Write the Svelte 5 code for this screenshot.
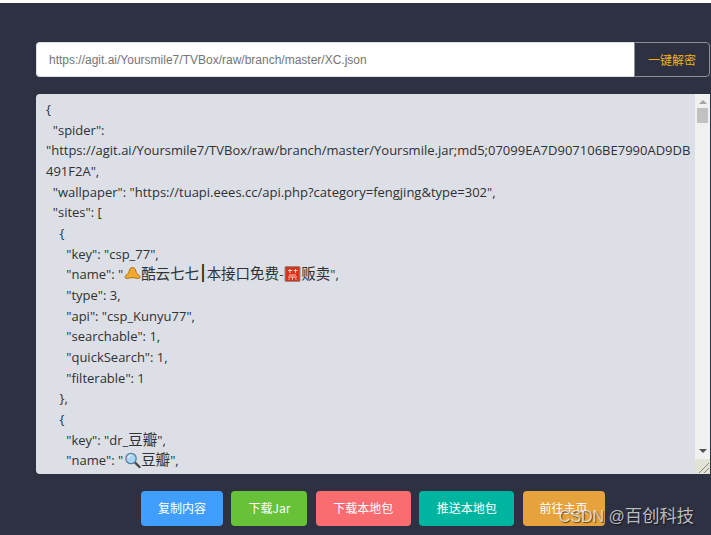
<script>
  const buttons = [
    { label: '复制内容', color: '#409eff', width: 82 },
    { label: '下载Jar', color: '#67c23a', width: 76 },
    { label: '下载本地包', color: '#f96c70', width: 95 },
    { label: '推送本地包', color: '#00b5a0', width: 95 },
    { label: '前往主页', color: '#e6a23c', width: 82 }
  ];
</script>

<div class="page">
  <div class="url-row">
    <input class="url-input" value="https://agit.ai/Yoursmile7/TVBox/raw/branch/master/XC.json" readonly />
    <button class="decrypt">一键解密</button>
  </div>

  <div class="panel">
    <pre class="code">{'{'}
  "spider":
"https://agit.ai/Yoursmile7/TVBox/raw/branch/master/Yoursmile.jar;md5;07099EA7D907106BE7990AD9DB
491F2A",
  "wallpaper": "https://tuapi.eees.cc/api.php?category=fengjing&type=302",
  "sites": [
    {'{'}
      "key": "csp_77",
      "name": "<svg class="emoji" viewBox="0 0 17 16"><path d="M8.500 1.500c-2.200 0-3.200 1.700-3.500 4-.2 1.500-1.500 2.700-3.200 4-1.300 1-.9 3 .9 3 1.500 0 2.300-.8 5.800-.8s4.300.8 5.800.8c1.800 0 2.200-2 .9-3-1.700-1.300-3-2.500-3.200-4-.3-2.300-1.300-4-3.500-4z" fill="#f0a92e" stroke="#a8650f" stroke-width=".9"/></svg><span class="cjk">酷云七七<span class="bar">┃</span>本接口免费</span>-<svg class="emoji" viewBox="0 0 17 16"><rect x="1" y=".5" width="15" height="15" rx="1" fill="#d8341c" stroke="#8c8c8c"/><path d="M4 4.500h4M6 3v4M9.500 4.500h4M11.500 3v4M5 9h7M4 11h9M8.500 11v3M6 12.500l-1.500 1M11 12.500l1.500 1" stroke="#ffd9d0" stroke-width=".9" fill="none"/></svg><span class="cjk">贩卖</span>",
      "type": 3,
      "api": "csp_Kunyu77",
      "searchable": 1,
      "quickSearch": 1,
      "filterable": 1
    {'}'},
    {'{'}
      "key": "dr_<span class="cjk">豆瓣</span>",
      "name": "<svg class="emoji" viewBox="0 0 17 16"><path d="M10.500 10l5 5" stroke="#4a4a4a" stroke-width="2.400" stroke-linecap="round"/><circle cx="7" cy="6.500" r="5.200" fill="#a9d5f3" stroke="#5b7f9e" stroke-width="1.300"/><path d="M4.200 6c.3-1.500 1.300-2.400 2.700-2.600" stroke="#fff" stroke-width="1" fill="none"/></svg><span class="cjk">豆瓣</span>",
</pre>
    <div class="scrollbar">
      <span class="arrow up"></span>
      <span class="thumb"></span>
      <span class="track"></span>
      <span class="arrow down"></span>
      <svg class="grip" viewBox="0 0 15 15"><path d="M4 14L14 4M9 14l5-5" stroke="#8a8a7c" stroke-width="1" fill="none"/></svg>
    </div>
  </div>

  <div class="actions">
    {#each buttons as b}
      <button class="action" style="background: {b.color}; width: {b.width}px">{b.label}</button>
    {/each}
  </div>

  <div class="watermark">CSDN @<span class="mark-cjk">百创科技</span></div>
</div>

<style>
  :global(body) {
    margin: 0;
    background: #fff;
  }

  .page {
    position: relative;
    box-sizing: border-box;
    height: 532px;
    margin-top: 3px;
    padding: 39px 1px 0 36px;
    background: #2d3142;
    font-family: "Open Sans", "Noto Sans CJK SC", sans-serif;
    overflow: hidden;
  }

  .url-row {
    display: flex;
    height: 35px;
    margin-bottom: 17px;
  }

  .url-input {
    flex: 1;
    min-width: 0;
    box-sizing: border-box;
    padding: 0 12px;
    border: 1px solid #dcdfe6;
    border-right: none;
    border-radius: 4px 0 0 4px;
    background: #fff;
    color: #757575;
    font-family: "Liberation Sans", "Noto Sans CJK SC", sans-serif;
    font-size: 12px;
    outline: none;
  }

  .decrypt {
    width: 76px;
    padding: 0;
    border: 1px solid #8d8f9a;
    border-radius: 0 4px 4px 0;
    background: #2d3142;
    color: #f0b01a;
    font-family: "Noto Sans CJK SC", sans-serif;
    font-size: 12px;
  }

  .panel {
    display: flex;
    height: 380px;
    border-radius: 4px 0 0 4px;
    background: #dcdfe6;
    overflow: hidden;
  }

  .code {
    flex: 1;
    margin: 0;
    padding: 5px 0 0 10px;
    overflow: hidden;
    color: #303133;
    font-family: "Open Sans", "Noto Sans CJK SC", sans-serif;
    font-size: 13px;
    line-height: 20.65px;
    white-space: pre;
  }

  .cjk {
    font-family: "Noto Sans CJK SC", sans-serif;
    font-size: 14.5px;
    line-height: 1;
  }

  .bar {
    display: inline-block;
    width: 7.5px;
    overflow: visible;
    text-indent: -3.5px;
    color: #3a2412;
    font-weight: 700;
    transform: scaleY(1.25);
  }

  .emoji {
    display: inline-block;
    width: 17px;
    height: 16px;
    margin-left: 1px;
    vertical-align: -3px;
  }

  .scrollbar {
    display: flex;
    flex-direction: column;
    align-items: center;
    width: 15px;
    background: #f0f0f0;
  }

  .arrow {
    flex: none;
    width: 0;
    height: 0;
    border-left: 4px solid transparent;
    border-right: 4px solid transparent;
  }

  .arrow.up {
    margin: 6px 0 4px;
    border-bottom: 4px solid #a3a3a3;
  }

  .arrow.down {
    margin: 4px 0 6px;
    border-top: 4px solid #505050;
  }

  .thumb {
    flex: none;
    width: 11px;
    height: 15px;
    background: #c1c1c1;
  }

  .track {
    flex: 1;
  }

  .grip {
    flex: none;
    display: block;
    width: 15px;
    height: 15px;
    background: #e1e3d5;
  }

  .actions {
    display: flex;
    gap: 8.4px;
    margin-top: 17px;
    padding-left: 105px;
  }

  .action {
    height: 35px;
    padding: 0 0 2px;
    border: none;
    border-radius: 4px;
    color: #fff;
    font-family: "Noto Sans CJK SC", sans-serif;
    font-size: 12px;
  }

  .watermark {
    position: absolute;
    right: 17px;
    bottom: 6px;
    color: rgba(255, 255, 255, 0.7);
    font-family: "Liberation Sans", "Noto Sans CJK SC", sans-serif;
    font-size: 16px;
    line-height: 24px;
    text-shadow: 1px 1px 1px rgba(0, 0, 0, 0.6);
  }

  .mark-cjk {
    font-size: 17.3px;
  }
</style>
